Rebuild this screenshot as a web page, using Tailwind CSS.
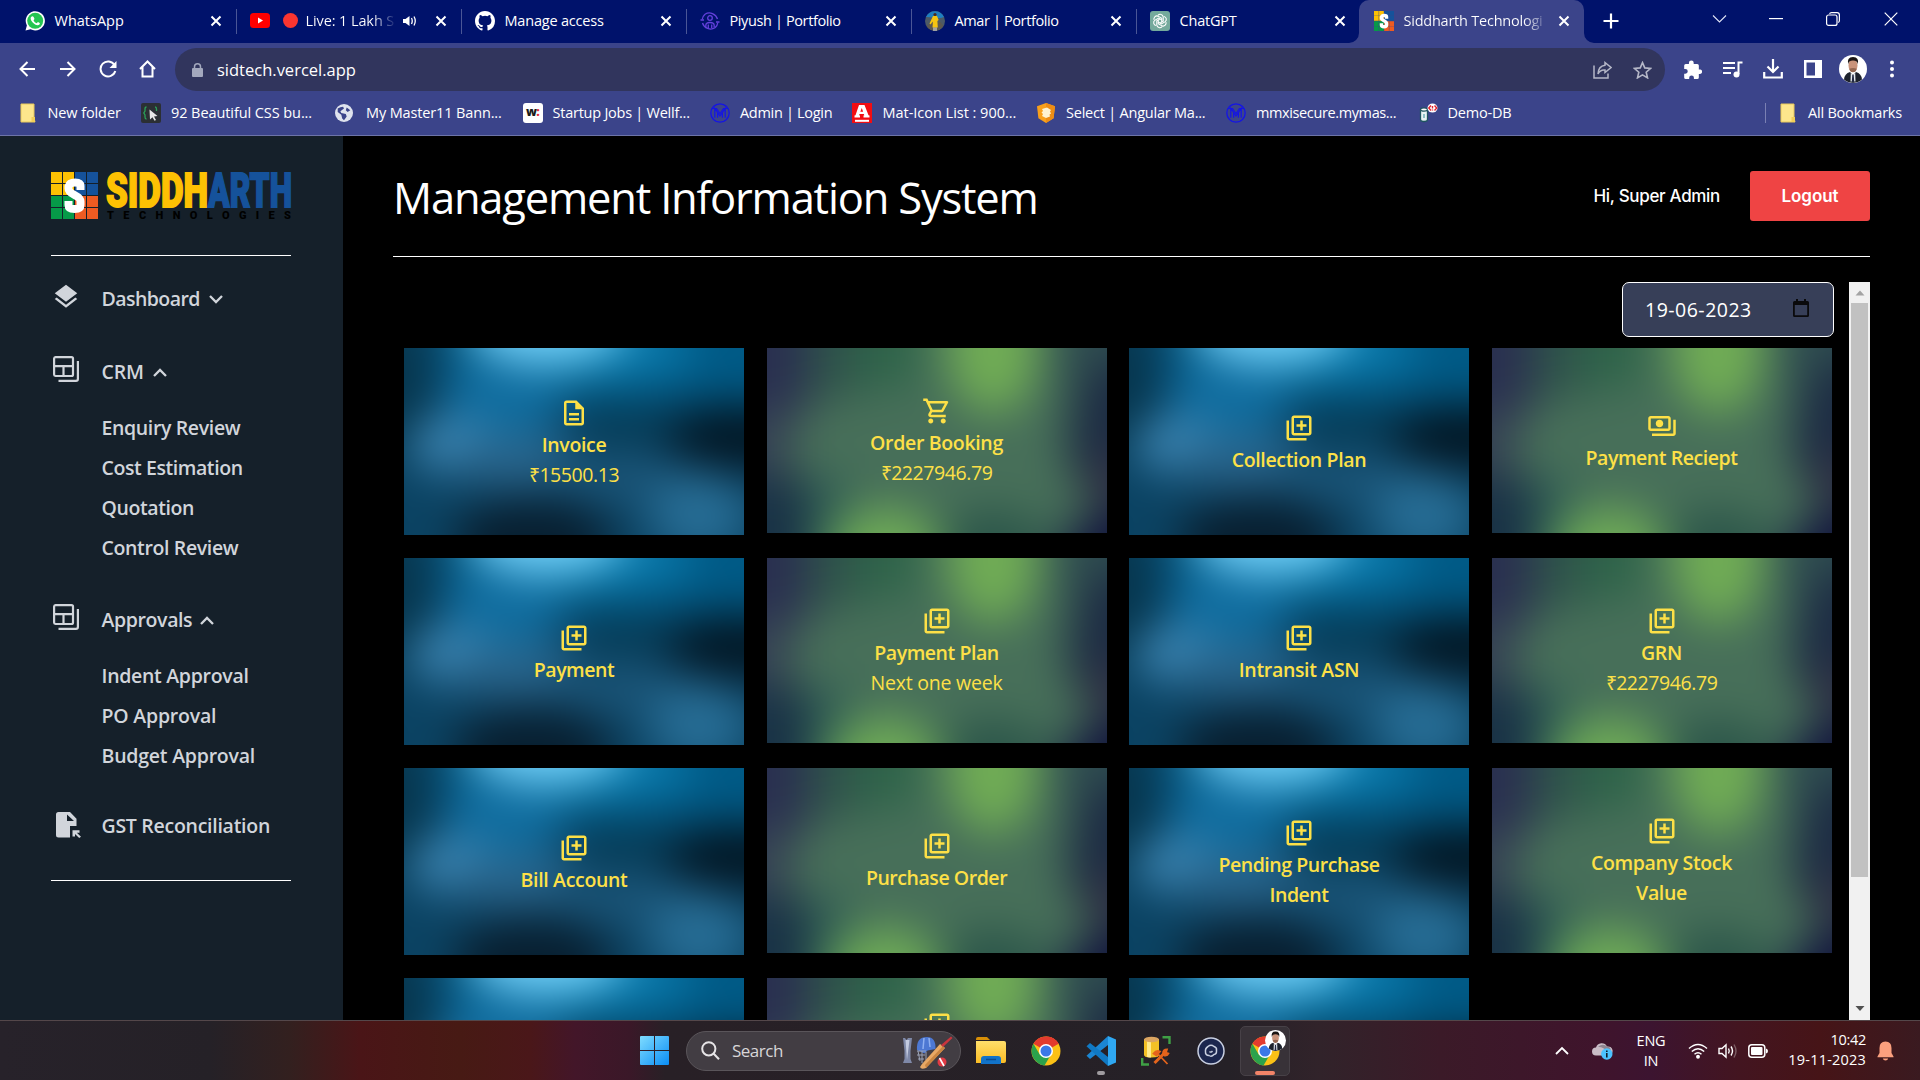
<!DOCTYPE html>
<html lang="en">
<head>
<meta charset="utf-8">
<title>Siddharth Technologies</title>
<script src="https://cdn.jsdelivr.net/npm/@tailwindcss/browser@4"></script>
</head>
<body class="w-[1920px] h-[1080px] overflow-hidden bg-black text-white font-['Open_Sans',sans-serif] flex flex-col">

<!-- shared symbols -->
<svg width="0" height="0" class="absolute">
  <defs>
    <filter id="soft" x="-60%" y="-60%" width="220%" height="220%" color-interpolation-filters="sRGB"><feGaussianBlur stdDeviation="22"/></filter>
    <linearGradient id="win" x1="0" y1="0" x2="1" y2="1"><stop offset="0" stop-color="#7fdcff"/><stop offset="1" stop-color="#0a8df5"/></linearGradient>
    <linearGradient id="fold" x1="0" y1="0" x2="0" y2="1"><stop offset="0" stop-color="#ffdf6b"/><stop offset="1" stop-color="#fbbc24"/></linearGradient>
  </defs>
  <symbol id="blue" viewBox="0 0 340 187" preserveAspectRatio="none">
    <rect width="340" height="187" fill="#0c4565"/>
    <g filter="url(#soft)">
      <rect x="-80" y="-80" width="500" height="350" fill="#0c4464"/>
      <rect x="40" y="-80" width="380" height="132" fill="#005a86"/>
      <ellipse cx="100" cy="50" rx="60" ry="45" fill="#0f6c9e"/>
      <ellipse cx="200" cy="0" rx="90" ry="32" fill="#0a7aac"/>
      <ellipse cx="142" cy="-24" rx="80" ry="40" fill="#74d2fa"/>
      <ellipse cx="-14" cy="40" rx="44" ry="70" fill="#06364e"/>
      <ellipse cx="48" cy="96" rx="44" ry="27" fill="#3c86b4"/>
      <ellipse cx="112" cy="112" rx="60" ry="26" fill="#2a658c"/>
      <ellipse cx="225" cy="78" rx="56" ry="18" fill="#043a54"/>
      <ellipse cx="335" cy="90" rx="72" ry="34" fill="#021826"/>
      <ellipse cx="215" cy="130" rx="60" ry="24" fill="#1b5578"/>
      <ellipse cx="128" cy="192" rx="80" ry="42" fill="#081f30"/>
      <ellipse cx="295" cy="166" rx="50" ry="44" fill="#266c94"/>
      <ellipse cx="-20" cy="180" rx="40" ry="50" fill="#0a4262"/>
    </g>
  </symbol>
  <symbol id="green" viewBox="0 0 340 185" preserveAspectRatio="none">
    <rect width="340" height="185" fill="#456f58"/>
    <g filter="url(#soft)">
      <rect x="-80" y="-80" width="500" height="350" fill="#476f59"/>
      <rect x="-80" y="-80" width="120" height="150" fill="#2a3050"/>
      <rect x="-80" y="60" width="104" height="70" fill="#364254"/>
      <rect x="-80" y="130" width="120" height="140" fill="#193246"/>
      <rect x="40" y="-80" width="50" height="130" fill="#2f534b"/>
      <rect x="40" y="130" width="40" height="100" fill="#305e54"/>
      <rect x="90" y="-80" width="60" height="120" fill="#2e6449"/>
      <ellipse cx="226" cy="0" rx="46" ry="66" fill="#70ac55"/>
      <rect x="290" y="-80" width="130" height="120" fill="#2f4d50"/>
      <ellipse cx="360" cy="90" rx="60" ry="80" fill="#1d2c44"/>
      <ellipse cx="352" cy="132" rx="36" ry="28" fill="#303044"/>
      <ellipse cx="225" cy="208" rx="60" ry="46" fill="#2c564a"/>
      <ellipse cx="118" cy="206" rx="58" ry="46" fill="#6eab56"/>
      <ellipse cx="362" cy="208" rx="70" ry="46" fill="#12163e"/>
    </g>
  </symbol>
  <symbol id="i-doc" viewBox="0 0 24 24"><path fill="currentColor" d="M8 16h8v2H8zm0-4h8v2H8zm6-10H6c-1.100 0-2 .9-2 2v16c0 1.100.890 2 1.990 2H18c1.100 0 2-.9 2-2V8l-6-6zm4 18H6V4h7v5h5v11z"/></symbol>
  <symbol id="i-cart" viewBox="0 0 24 24"><path fill="currentColor" d="M15.550 13c.750 0 1.410-.410 1.750-1.030l3.580-6.490A.996.996 0 0 0 20.010 4H5.210l-.940-2H1v2h2l3.600 7.590-1.350 2.440C4.520 15.370 5.480 17 7 17h12v-2H7l1.100-2h7.450zM6.160 6h12.150l-2.760 5H8.530L6.160 6zM7 18c-1.100 0-1.990.9-1.990 2S5.900 22 7 22s2-.9 2-2-.9-2-2-2zm10 0c-1.100 0-1.990.9-1.990 2s.89 2 1.990 2 2-.9 2-2-.9-2-2-2z"/></symbol>
  <symbol id="i-lib" viewBox="0 0 24 24"><path fill="currentColor" d="M4 6H2v14c0 1.100.9 2 2 2h14v-2H4V6zm16-4H8c-1.100 0-2 .9-2 2v12c0 1.100.9 2 2 2h12c1.100 0 2-.9 2-2V4c0-1.100-.9-2-2-2zm0 14H8V4h12v12zm-7-2h2v-3h3V9h-3V6h-2v3h-3v2h3z"/></symbol>
  <symbol id="i-pay" viewBox="0 0 24 24"><path fill="currentColor" d="M19 14V6c0-1.100-.9-2-2-2H3c-1.100 0-2 .9-2 2v8c0 1.100.9 2 2 2h14c1.100 0 2-.9 2-2zm-2 0H3V6h14v8zm-7-7c-1.660 0-3 1.340-3 3s1.340 3 3 3 3-1.340 3-3-1.340-3-3-3zm13 0v11c0 1.100-.9 2-2 2H4v-2h17V7h2z"/></symbol>
  <symbol id="i-ballot" viewBox="0 0 26 26"><path fill="none" stroke="currentColor" stroke-width="2.200" d="M2.500 1.100h16a1.500 1.500 0 0 1 1.500 1.500v15.900a1.500 1.500 0 0 1-1.500 1.500h-16a1.500 1.500 0 0 1-1.400-1.500v-16a1.500 1.500 0 0 1 1.400-1.400zM1 10.200h19M10.500 10.200V20M24.900 5v18a1.900 1.900 0 0 1-1.900 1.900H5.500"/></symbol>
  <symbol id="x" viewBox="0 0 12 12"><path d="M1.500 1.500l9 9m0-9l-9 9" stroke="#fff" stroke-width="2"/></symbol>
  <symbol id="bfolder" viewBox="0 0 20 20"><path d="M3 1h13v14l1 4H3z" fill="#fde68c" stroke="#e9c95a" stroke-width="1"/><path d="M13.500 19v-5h3.500v5z" fill="#f2cf57"/></symbol>
  <symbol id="bm" viewBox="0 0 20 20"><circle cx="10" cy="10" r="9.200" fill="none" stroke="#1414e6" stroke-width="1.300"/><path d="M4.800 14.800V5.500L10 13l5.200-7.500v9.300M7.600 14.800V9.300M12.400 14.800V9.300M2.800 5.500h3.700L10 10.500l3.500-5h3.700" fill="none" stroke="#1414e6" stroke-width="1.200"/></symbol>
  <symbol id="chrome" viewBox="0 0 30 30"><circle cx="15" cy="15" r="14.500" fill="#fbc116"/><path d="M15 15L2.440 7.750A14.500 14.500 0 0 1 27.560 7.750z" fill="#e33b2e"/><path d="M15 .5a14.500 14.500 0 0 1 12.560 7.250H15z" fill="#e33b2e"/><path d="M2.440 7.750A14.500 14.500 0 0 0 13.500 29.400l6.500-11L15 15l-6.300 3.600z" fill="#2ba24c"/><circle cx="15" cy="15" r="7" fill="#fff"/><circle cx="15" cy="15" r="5.500" fill="#3b78e7"/></symbol>
  <symbol id="face" viewBox="0 0 28 28"><circle cx="14" cy="14" r="14" fill="#fff"/><path d="M5 24.500q.5-6 6-7.500l3 3 3-3q5.500 1.500 6 7.500A14 14 0 0 1 5 24.500z" fill="#1d222c"/><path d="M11.800 17.500l2.200 3 2.200-3 .3 9h-5z" fill="#e8edf2"/><path d="M13.300 20h1.400l.6 7.500h-2.600z" fill="#232a45"/><ellipse cx="14" cy="10.500" rx="4.500" ry="6.500" fill="#c9937a"/><path d="M9.200 9.500Q7.500 2 14 2t4.800 7.500Q18.600 5.500 14 5.500T9.200 9.500z" fill="#1b1513"/><path d="M10.200 13.800q1.800-.8 3.800-.8t3.800.8q-.8 3.500-3.800 3.500t-3.800-3.500z" fill="#936650"/></symbol>
  <symbol id="sid" viewBox="0 0 47 47"><path fill="#fdc103" d="M0 0h11v11H0zM12 0h11v11H12zM0 12h11v11H0zM12 12h11v11H12z"/><path fill="#15529b" d="M24 0h11v11H24zM36 0h11v11H36zM24 12h11v11H24zM36 12h11v11H36z"/><path fill="#069a48" d="M0 24h11v11H0zM12 24h11v11H12zM0 36h11v11H0zM12 36h11v11H12z"/><path fill="#ee5b22" d="M24 24h11v11H24zM36 24h11v11H36zM24 36h11v11H24zM36 36h11v11H36z"/><path d="M29.500 18v-4q0-3.500-5.500-3.500t-6.500 4v2q0 3.500 6 6.500t6 6.500v3.500q0 4-6 4t-6-4v-4" fill="none" stroke="#fff" stroke-width="8"/></symbol>
</svg>

<!-- tab strip -->
<header class="h-[43px] shrink-0 bg-[#00126b] flex items-start pl-[10.5px] text-[14.5px] whitespace-nowrap">
  <div class="w-[225px] h-[41px] flex items-center pl-[14px] relative">
    <svg class="size-5" viewBox="0 0 20 20"><path d="M.5 19.500l1.400-5A9.600 9.600 0 1 1 5.600 18.200z" fill="#fff"/><circle cx="10.200" cy="9.800" r="8" fill="#25c651"/><path d="M7.200 5.200c-2.500 1-1.600 4 .5 6.200s5 4 7 1.900c.7-1-.3-1.700-1.800-2.300l-1.200 1.200c-1.500-.5-2.500-1.500-3.200-3l1-1.200c-.5-1.500-1-2.800-2.300-2.800z" fill="#fff"/></svg>
    <span class="ml-[10px]">WhatsApp</span>
    <svg class="size-3 absolute right-[13.500px] top-[15px]"><use href="#x"/></svg>
  </div>
  <div class="w-[225px] h-[41px] flex items-center pl-[14px] relative">
    <i class="absolute left-0 top-[9px] w-px h-[25px] bg-[#4a5696]"></i>
    <svg class="w-5 h-[15px]" viewBox="0 0 20 15"><rect width="20" height="15" rx="3.500" fill="#f00"/><path d="M8 4.500v6l5-3z" fill="#fff"/></svg>
    <i class="ml-[13px] w-[15px] h-[15px] rounded-full bg-[#fa3530]"></i>
    <span class="ml-2 w-[88px] overflow-hidden tracking-[-0.1px] bg-[linear-gradient(90deg,#fff_75%,#00126b_103%)] bg-clip-text text-transparent">Live: 1 Lakh S</span>
    <svg class="ml-[9px] w-[13px] h-3" viewBox="0 0 13 12"><path d="M0 4h2.500L6.500 1v10L2.500 8H0z" fill="#fff"/><path d="M8.500 3q1.500 3 0 6M11 1.500q2.500 4.500 0 9" stroke="#fff" stroke-width="1.300" fill="none"/></svg>
    <svg class="size-3 absolute right-[13.500px] top-[15px]"><use href="#x"/></svg>
  </div>
  <div class="w-[225px] h-[41px] flex items-center pl-[14px] relative">
    <i class="absolute left-0 top-[9px] w-px h-[25px] bg-[#4a5696]"></i>
    <svg class="size-5" viewBox="0 0 16 16"><path fill="#fff" d="M8 0C3.580 0 0 3.580 0 8c0 3.540 2.290 6.530 5.470 7.590.4.070.55-.17.55-.38 0-.19-.01-.82-.01-1.490-2.010.37-2.530-.49-2.690-.94-.09-.23-.48-.94-.82-1.130-.28-.15-.68-.52-.01-.53.63-.01 1.080.58 1.230.82.72 1.210 1.870.87 2.330.66.07-.52.28-.87.51-1.070-1.780-.2-3.640-.89-3.640-3.950 0-.87.31-1.590.82-2.150-.08-.2-.36-1.020.08-2.120 0 0 .67-.21 2.200.82a7.640 7.640 0 0 1 4 0c1.530-1.040 2.200-.82 2.200-.82.44 1.100.16 1.920.08 2.120.51.56.82 1.270.82 2.150 0 3.070-1.870 3.750-3.650 3.950.29.25.54.73.54 1.480 0 1.070-.01 1.930-.01 2.200 0 .21.15.46.55.38A8.010 8.010 0 0 0 16 8c0-4.420-3.580-8-8-8z"/></svg>
    <span class="ml-[10px] tracking-[-0.2px]">Manage access</span>
    <svg class="size-3 absolute right-[13.500px] top-[15px]"><use href="#x"/></svg>
  </div>
  <div class="w-[225px] h-[41px] flex items-center pl-[14px] relative">
    <i class="absolute left-0 top-[9px] w-px h-[25px] bg-[#4a5696]"></i>
    <svg class="size-5" viewBox="0 0 20 20" fill="none" stroke="#6340dc" stroke-width="1.300"><path d="M5 3.200A8.500 8.500 0 0 1 17.500 8M15 16.800A8.500 8.500 0 0 1 2.500 12M2.200 8.500a8 8 0 0 1 2.800-5.300M17.800 11.500a8 8 0 0 1-2.800 5.300"/><circle cx="10" cy="7" r="2.300"/><path d="M5.800 16.500v-2q0-3 4.200-3t4.200 3v2M8.300 13.500v3.500m3.400-3.500v3.500M.5 9h3.500m12 2h3.500"/></svg>
    <span class="ml-[10px] tracking-[-0.38px]">Piyush | Portfolio</span>
    <svg class="size-3 absolute right-[13.500px] top-[15px]"><use href="#x"/></svg>
  </div>
  <div class="w-[225px] h-[41px] flex items-center pl-[14px] relative">
    <i class="absolute left-0 top-[9px] w-px h-[25px] bg-[#4a5696]"></i>
    <svg class="size-5" viewBox="0 0 20 20"><circle cx="10" cy="10" r="10" fill="#4d5a66"/><path d="M1 6A10 10 0 0 1 19 6q-5 2-9 1T1 6z" fill="#1f7fc0"/><path d="M1.500 15a10 10 0 0 0 17 0l-3-4-10 1z" fill="#5c5850"/><path d="M8 5h4l1.600 4-1.200 1 .4 6.500H7.500l.4-6-2.400 3-1-1z" fill="#f5c411"/><circle cx="10" cy="3.500" r="1.600" fill="#4a2b1c"/><path d="M8.500 16.500h1V20h-1zm2 0h1V20h-1z" fill="#eee"/></svg>
    <span class="ml-[10px] tracking-[-0.38px]">Amar | Portfolio</span>
    <svg class="size-3 absolute right-[13.500px] top-[15px]"><use href="#x"/></svg>
  </div>
  <div class="w-[223.500px] h-[41px] flex items-center pl-[14px] relative">
    <i class="absolute left-0 top-[9px] w-px h-[25px] bg-[#4a5696]"></i>
    <svg class="size-5" viewBox="0 0 20 20" fill="none" stroke="#fff" stroke-width="1.100"><rect width="20" height="20" rx="3" fill="#74aa9c" stroke="none"/><path id="pet" d="M8 4.300a3 3 0 0 1 5.200 1.500v4.400l-3.200 1.900"/><use href="#pet" transform="rotate(60 10 10)"/><use href="#pet" transform="rotate(120 10 10)"/><use href="#pet" transform="rotate(180 10 10)"/><use href="#pet" transform="rotate(240 10 10)"/><use href="#pet" transform="rotate(300 10 10)"/></svg>
    <span class="ml-[10px] tracking-[-0.2px]">ChatGPT</span>
    <svg class="size-3 absolute right-[13.500px] top-[15px]"><use href="#x"/></svg>
  </div>
  <div class="w-[225px] h-[43px] pb-[2px] flex items-center pl-[15px] relative bg-[#3b448a] rounded-t-[10px]">
    <svg class="absolute -left-[10px] bottom-0 size-[10px]" viewBox="0 0 10 10"><path d="M10 0v10H0A10 10 0 0 0 10 0z" fill="#3b448a"/></svg>
    <svg class="absolute -right-[10px] bottom-0 size-[10px]" viewBox="0 0 10 10"><path d="M0 0v10h10A10 10 0 0 1 0 0z" fill="#3b448a"/></svg>
    <svg class="size-5"><use href="#sid"/></svg>
    <span class="ml-[9.500px] w-[141px] overflow-hidden tracking-[-0.23px] bg-[linear-gradient(90deg,#fff_85%,#3b448a_103%)] bg-clip-text text-transparent">Siddharth Technologi</span>
    <svg class="size-3 absolute right-[14.500px] top-[15px]"><use href="#x"/></svg>
  </div>
  <svg class="ml-[19px] mt-[13px] size-4" viewBox="0 0 16 16"><path d="M8 0.500v15M.5 8h15" stroke="#fff" stroke-width="2.200"/></svg>
  <svg class="ml-[92.500px] mt-[14px] w-[15px] h-[10px]" viewBox="0 0 15 10"><path d="M1 1.500l6.500 6.500L14 1.500" stroke="#dfe3f5" stroke-width="1.100" fill="none"/></svg>
  <svg class="ml-[42.500px] mt-[18px] w-[14px] h-[2px]"><rect width="14" height="1.200" fill="#fff"/></svg>
  <svg class="ml-[43px] mt-[12px] size-[14px]" viewBox="0 0 14 14" fill="none" stroke="#fff" stroke-width="1.200"><rect x=".6" y="3" width="10.400" height="10.400" rx="2"/><path d="M3.500 1.800q.5-1.200 2-1.200H11q2.400 0 2.400 2.400v5.500q0 1.500-1.200 2"/></svg>
  <svg class="ml-[44px] mt-[12px] size-[14px]" viewBox="0 0 14 14"><path d="M.7.700l12.600 12.600M13.300.700L.7 13.300" stroke="#fff" stroke-width="1.200"/></svg>
</header>

<!-- toolbar -->
<div class="h-[52px] shrink-0 bg-[#3b448a] flex items-center pl-[19px] text-[16.5px]">
  <svg class="size-4" viewBox="0 0 16 16" fill="none" stroke="#fff" stroke-width="2"><path d="M16 8H1.500M8.500 1L1.500 8l7 7"/></svg>
  <svg class="size-4 ml-[24.500px]" viewBox="0 0 16 16" fill="none" stroke="#fff" stroke-width="2"><path d="M0 8h14.500M7.500 1l7 7-7 7"/></svg>
  <svg class="w-[18px] h-[18px] ml-[23.500px]" viewBox="0 0 18 18"><path d="M15.500 5A7.500 7.500 0 1 0 16.300 11" fill="none" stroke="#fff" stroke-width="2"/><path d="M17.500 1v7h-7z" fill="#fff"/></svg>
  <svg class="w-[17px] h-[18px] ml-[22px]" viewBox="0 0 17 18" fill="none" stroke="#fff" stroke-width="2"><path d="M1 9l7.500-7.500L16 9M3.500 7v9.500h10V7"/></svg>
  <div class="ml-[19px] w-[1490px] h-[43px] mt-px rounded-full bg-[#31355d] flex items-center pl-[17px] pr-[13px]">
    <svg class="w-[11px] h-[14px]" viewBox="0 0 11 14"><rect y="5" width="11" height="9" rx="1" fill="#a3a8bd"/><path d="M2.500 6V3.800a3 3 0 0 1 6 0V6" fill="none" stroke="#a3a8bd" stroke-width="1.500"/></svg>
    <span class="ml-[14px] leading-[20px] mt-px">sidtech.vercel.app</span>
    <svg class="ml-auto w-[19px] h-[18px]" viewBox="0 0 19 18" fill="none" stroke="#b5b7c7" stroke-width="1.500"><path d="M1 4.500V17h14v-4.500M12 1.500l6 5-6 5V9Q7 8.500 5 13q.3-8 7-8.800z"/></svg>
    <svg class="ml-[21px] w-[19px] h-[18px]" viewBox="0 0 20 19" fill="none" stroke="#b5b7c7" stroke-width="1.700"><path d="M10 1.700l2.400 5.600 6.100.5-4.600 4 1.400 6-5.300-3.200-5.300 3.200 1.400-6-4.600-4 6.100-.5z"/></svg>
  </div>
  <svg class="ml-[18px] w-[19px] h-[19px]" viewBox="0 0 24 24"><path fill="#fff" d="M22 12h-2V7a2 2 0 0 0-2-2h-4.500V3.500a3 3 0 0 0-6 0V5H3.500a2 2 0 0 0-2 2v4.300H3a3 3 0 0 1 0 6H1.500V22a2 2 0 0 0 2 2h4.300v-1.500a3 3 0 0 1 6 0V24H18a2 2 0 0 0 2-2v-4.300h1.500a2.900 2.900 0 0 0 .5-5.700z"/></svg>
  <svg class="ml-[21px] w-[20px] h-[17px]" viewBox="0 0 20 17"><path d="M0 2h12M0 7h12M0 12h8M19.500 1.500H15.500V13" stroke="#fff" stroke-width="2" fill="none"/><circle cx="13.500" cy="13.500" r="3" fill="#fff"/></svg>
  <svg class="ml-[20px] w-[20px] h-[20px]" viewBox="0 0 20 20" fill="none" stroke="#fff" stroke-width="2.200"><path d="M10 0v12M4.500 7.500L10 13l5.500-5.500M1.200 13v5.500h17.600V13"/></svg>
  <svg class="ml-[21px] w-[18px] h-[18px]" viewBox="0 0 18 18"><path fill="#fff" fill-rule="evenodd" d="M0 0h18v18H0zM2.500 2.500v13H11v-13z"/></svg>
  <svg class="ml-[17px] size-7"><use href="#face"/></svg>
  <svg class="ml-[23px] w-[4px] h-[18px]" viewBox="0 0 4 18" fill="#fff"><circle cx="2" cy="2.500" r="2"/><circle cx="2" cy="9" r="2"/><circle cx="2" cy="15.500" r="2"/></svg>
</div>

<!-- bookmarks bar -->
<div class="h-[41px] shrink-0 bg-[#3b448a] border-b border-[#6d74a8] flex items-center pl-[18px] pb-[5px] text-[14.5px] whitespace-nowrap tracking-[-0.2px]">
  <div class="w-[123px] flex items-center gap-[9.500px]"><svg class="size-5"><use href="#bfolder"/></svg><span class="tracking-[-0.1px]">New folder</span></div>
  <div class="w-[195px] flex items-center gap-[10px]"><svg class="size-5" viewBox="0 0 20 20"><rect width="20" height="20" rx="2" fill="#2b2f33"/><path d="M5.500 4Q4 4 4 6v2L2.800 10 4 12v2q0 2 1.500 2M14 4q1.500 0 1.500 2v2" stroke="#2ba05a" stroke-width="1.300" fill="none"/><path d="M8.500 6.500l8 6.500-3.500.5 2 3.500-1.500.8-2-3.500L9 16.500z" fill="#e8e8e8"/></svg><span class="tracking-[-0.08px]">92 Beautiful CSS bu...</span></div>
  <div class="w-[186.600px] flex items-center gap-[13px]"><svg class="size-[18px] -ml-px" viewBox="0 0 20 20"><circle cx="10" cy="10" r="10" fill="#dfe3ee"/><path d="M3 5q3-2 6-2l1 2-4 3 1 2 5 1 1 3-3 4-2-2-1-4-4-3zM13 4l4 3-3 2-2-2z" fill="#3b448a"/></svg><span class="tracking-[-0.14px]">My Master11 Bann...</span></div>
  <div class="w-[187.400px] flex items-center gap-[10px]"><span class="size-5 rounded-[3px] bg-white text-[#1a1a1a] font-extrabold text-[12px] leading-[18px] text-center font-['Open_Sans'] tracking-[-0.5px]">w<b class="text-[#e8303a]">:</b></span><span class="tracking-[-0.25px]">Startup Jobs | Wellf...</span></div>
  <div class="w-[142.500px] flex items-center gap-[10px]"><svg class="size-5"><use href="#bm"/></svg><span class="tracking-[-0.3px]">Admin | Login</span></div>
  <div class="w-[184px] flex items-center gap-[10px]"><svg class="size-5" viewBox="0 0 20 20"><rect width="20" height="20" fill="#f20d12"/><path d="M3 17.800h14" stroke="#fff" stroke-width="2"/><path fill="#fff" fill-rule="evenodd" d="M2.500 14.500v-2l1-.3L7 2h5.500l4 10.200 1 .3v2h-6v-2l.8-.3-.4-1.200H7.500l-.4 1.200.9.300v2zM8.300 8.700h2.800L9.800 5z"/></svg><span class="tracking-[-0.02px]">Mat-Icon List : 900...</span></div>
  <div class="w-[190px] flex items-center gap-[9.500px]"><svg class="size-5" viewBox="0 0 20 20"><path d="M10 0l9 3.300-1.400 12L10 20 2.400 15.300 1 3.300z" fill="#f9a01b"/><path d="M10 0l9 3.300-1.400 12L10 20z" fill="#ee8d14"/><path d="M6 6l5-1.500L15 7l-1 1.500 1 2-1.500 1 .5 2L10 15l-4-2 1-2-1.500-1.500L7 8z" fill="#fff3d0"/></svg><span class="tracking-[-0.22px]">Select | Angular Ma...</span></div>
  <div class="w-[191.500px] flex items-center gap-[9.500px]"><svg class="size-5"><use href="#bm"/></svg><span class="tracking-[-0.38px]">mmxisecure.mymas...</span></div>
  <div class="flex items-center gap-[9.500px]"><svg class="size-5" viewBox="0 0 20 20"><path d="M2.500 6.500v10q0 2 3.500 2t3.500-2v-10" fill="#e9f4f4" stroke="#1f5560" stroke-width="1.300"/><ellipse cx="6" cy="6.500" rx="3.500" ry="1.600" fill="#fff" stroke="#1f5560" stroke-width="1.300"/><path d="M6 15v-4" stroke="#6fb0b8" stroke-width="1.500"/><ellipse cx="14.500" cy="5" rx="5" ry="4.500" fill="#fff"/><path d="M13 2.500L10.800 5 13 7.500M16.500 2.500L18.700 5l-2.200 2.500M14.500 3v2.500m0 1v1" stroke="#e0242f" stroke-width="1.400" fill="none"/></svg><span class="tracking-[-0.2px]">Demo-DB</span></div>
  <i class="ml-auto w-px h-5 bg-[#7a80b3]"></i>
  <svg class="ml-[12px] size-5"><use href="#bfolder"/></svg><span class="ml-[10px] mr-[18px]">All Bookmarks</span>
</div>

<!-- web page -->
<div class="h-[884px] shrink-0 flex overflow-hidden">
  <aside class="w-[343px] bg-[#15202a] px-[51px] pt-[35px] text-[#d1d5db] text-[19.5px] font-semibold tracking-[-0.35px] whitespace-nowrap">
    <svg class="w-[241px] h-[49px] tracking-normal" viewBox="0 -1 241 49">
      <svg width="47" height="47"><use href="#sid"/></svg>
      <g font-family="Roboto, sans-serif" font-weight="900">
        <g transform="translate(55 34.500)" font-size="47.500" stroke-width="1.800"><text textLength="102" lengthAdjust="spacingAndGlyphs" fill="#fdc103" stroke="#fdc103">SIDDH</text><text x="102" textLength="84" lengthAdjust="spacingAndGlyphs" fill="#15529b" stroke="#15529b">ARTH</text></g>
        <text x="56" y="46.800" font-size="11" textLength="184" fill="#000">TECHNOLOGIES</text>
      </g>
    </svg>
    <hr class="mt-[35px] w-[240px] border-0 h-px bg-white">
    <nav class="mt-[23px]">
      <div class="h-10 flex items-center"><svg class="w-[30px] h-[30px] -mt-[7px]" viewBox="0 0 24 24"><path fill="currentColor" d="M12 3L3 9.800l9 6.700 9-6.700zM12 18.900l-7.500-5.700L3 14.400l9 6.900 9-6.900-1.500-1.200z"/></svg><span class="ml-[20.500px] tracking-[-0.55px]">Dashboard</span><svg class="ml-[9px] w-[14px] h-[9px]" viewBox="0 0 14 9"><path d="M1 1l6 6 6-6" fill="none" stroke="currentColor" stroke-width="2.300"/></svg></div>
      <div class="mt-[33px] h-10 flex items-center"><svg class="size-[26px] ml-[2px] -mt-[7px]"><use href="#i-ballot"/></svg><span class="ml-[22.500px] tracking-[-0.1px]">CRM</span><svg class="ml-[9px] w-[14px] h-[9px]" viewBox="0 0 14 9"><path d="M1 8l6-6 6 6" fill="none" stroke="currentColor" stroke-width="2.300"/></svg></div>
      <ul class="mt-[16px] pl-[50.500px] leading-[40px]"><li class="tracking-[-0.36px]">Enquiry Review</li><li class="tracking-[-0.42px]">Cost Estimation</li><li class="tracking-[-0.4px]">Quotation</li><li class="tracking-[-0.36px]">Control Review</li></ul>
      <div class="mt-[32px] h-10 flex items-center"><svg class="size-[26px] ml-[2px] -mt-[7px]"><use href="#i-ballot"/></svg><span class="ml-[22.500px] tracking-[-0.38px]">Approvals</span><svg class="ml-[8px] w-[14px] h-[9px]" viewBox="0 0 14 9"><path d="M1 8l6-6 6 6" fill="none" stroke="currentColor" stroke-width="2.300"/></svg></div>
      <ul class="mt-[16px] pl-[50.500px] leading-[40px]"><li class="tracking-[-0.3px]">Indent Approval</li><li class="tracking-[-0.2px]">PO Approval</li><li class="tracking-[-0.22px]">Budget Approval</li></ul>
      <div class="mt-[29.500px] h-10 flex items-center"><svg class="w-[25px] h-[26px] ml-[5px] -mt-px" viewBox="0 0 25 26"><path fill="currentColor" fill-rule="evenodd" d="M2.500 0H14l6.500 6.800V14H14v11.500H2.500A2.500 2.500 0 0 1 0 23V2.500A2.500 2.500 0 0 1 2.500 0zM11 2.500V9h7z"/><path fill="currentColor" d="M16.500 18.200h7v2.500h-2.700l4.200 4L23.200 26 19 22v2.500h-2.500z"/></svg><span class="ml-[20.500px] tracking-[-0.27px]">GST Reconciliation</span></div>
    </nav>
    <hr class="mt-[34.500px] w-[240px] border-0 h-px bg-white">
  </aside>

  <main class="flex-1 pl-[50px] pr-[50px] flex flex-col">
    <div class="h-[120px] flex items-center text-[17px]">
      <h1 class="text-[43.5px] leading-[60px] tracking-[-1.2px] mt-[4px] whitespace-nowrap">Management Information System</h1>
      <span class="ml-auto mt-px font-[Inter] font-medium tracking-[-0.32px]">Hi, Super Admin</span>
      <button class="ml-[30px] w-[120px] h-[50px] pt-px rounded-[3px] bg-[#ef4444] font-[Inter] font-semibold tracking-[-0.05px]">Logout</button>
    </div>
    <div class="h-px bg-white"></div>
    <div class="flex mt-[25px] h-[738px] overflow-hidden">
      <div class="flex-1 pl-[11px]">
        <div class="flex"><div class="ml-[1218px] w-[212px] h-[55px] rounded-[7px] border border-white bg-[#373f58] flex items-center pl-[22px] text-[19.5px] tracking-[0.5px] whitespace-nowrap">19-06-2023<svg class="ml-[41px] -mt-[3px] w-4 h-[18px]" viewBox="0 0 16 18"><path fill="#0a0a0c" fill-rule="evenodd" d="M3 0h2v2h6V0h2v2h1.500A1.500 1.500 0 0 1 16 3.500v13a1.500 1.500 0 0 1-1.500 1.500h-13A1.500 1.500 0 0 1 0 16.500v-13A1.500 1.500 0 0 1 1.500 2H3zM1.800 6v10.200h12.400V6z"/></svg></div></div>
        <div id="grid" class="mt-[11px] grid grid-cols-[repeat(4,340px)] gap-x-[22.500px] auto-rows-[187px] gap-y-[23px] text-[#fde047] text-[19.5px] leading-[30px]"></div>
      </div>
      <div class="w-[21px] bg-[#f1f1f1] flex flex-col items-center">
        <svg class="h-[21px] w-[10px]" viewBox="0 0 10 21"><path d="M5 8.500l4.500 5h-9z" fill="#a3a3a3"/></svg>
        <div class="w-[17px] h-[574px] bg-[#c1c1c1]"></div>
        <svg class="mt-auto h-[23px] w-[10px]" viewBox="0 0 10 23"><path d="M5 14l4.500-5h-9z" fill="#505050"/></svg>
      </div>
    </div>
  </main>
</div>

<!-- taskbar -->
<footer class="h-[60px] shrink-0 border-t border-[#54474a] bg-[linear-gradient(90deg,#27222a_0,#252127_210px,#33201f_290px,#4a1517_360px,#471a14_460px,#4a1719_530px,#431629_575px,#3a1828_630px,#282026_665px,#252127_1230px,#31232a_1320px,#3b1a28_1440px,#3f142c_1600px,#3c1430_1650px,#431520_1740px,#461417_1820px,#3a1a20_1920px)] flex items-center text-[14.5px]">
  <svg class="ml-[640px] size-[29px]" viewBox="0 0 29 29"><path fill="url(#win)" d="M0 1q0-1 1-1h13v14H0zM15 0h13q1 0 1 1v13H15zM0 15h14v14H1q-1 0-1-1zM15 15h14v13q0 1-1 1H15z"/></svg>
  <div class="ml-[17px] w-[275px] h-10 rounded-full bg-[#423d43] border border-[#5a555a] flex items-center pl-[14px] text-[17px] text-[#d8d6d8]">
    <svg class="size-[19px]" viewBox="0 0 19 19" fill="none" stroke="#e6e4e6" stroke-width="2"><circle cx="7.800" cy="7.800" r="6.600"/><path d="M12.500 12.500l5.500 5.800"/></svg>
    <span class="ml-[12px] tracking-[-0.5px]">Search</span>
    <svg class="ml-auto mr-[6px] w-[52px] h-[36px] mt-[4px]" viewBox="0 0 52 36"><path d="M1 3h2l1.500 2L6 3h4L8.500 16v8l1.500 4H1l1.500-4v-8z" fill="#7f89a8"/><path d="M3.500 5l1.500 20L7.500 5z" fill="#c4cbe0"/><path d="M15 15Q14 2 25 2q9 0 8.500 12l-8 1.500-3 3z" fill="#4d78d3"/><path d="M22 3l-1 11M27 3l1 9" stroke="#8fb0f0" stroke-width="1.500"/><path d="M15 16h9M15 20h8M16 24h6M16 16l2 10M20 16v12M24 17v8" stroke="#9aa2b5" stroke-width="1" fill="none"/><path d="M20 29L38 9l5 4-19 20q-5 2-6-1z" fill="#e8a865"/><path d="M23 30L41 11l2 2-19 20z" fill="#c98440"/><path d="M39 10L49 1.500l1.500 1.500-9.500 9z" fill="#c9353d"/><circle cx="40" cy="27" r="4.500" fill="#e03a44"/><path d="M37.500 23l4.500 8" stroke="#fff" stroke-width="1.600"/></svg>
  </div>
  <svg class="ml-[15px] w-[30px] h-[27px]" viewBox="0 0 30 27"><path d="M0 2q0-2 2-2h9l3 3H0z" fill="#d98f07"/><path d="M0 4h28q2 0 2 2v18q0 2-2 2H0z" fill="url(#fold)"/><path d="M5 27v-5q0-3 3-3h14q3 0 3 3v5z" fill="#1273c9"/><path d="M10 22.500h10" stroke="#0a4c92" stroke-width="1.500"/></svg>
  <svg class="ml-[25px] size-[30px]"><use href="#chrome"/></svg>
  <div class="ml-[25px] relative"><svg class="size-[30px]" viewBox="0 0 30 30"><path d="M22 0l8 3.500v23L22 30z" fill="#2fa8f2"/><path d="M22 0v9L4 23l-3.500-3.200z" fill="#1b86d3"/><path d="M22 30v-9L4 7 .5 10.200z" fill="#1079c4"/></svg><i class="absolute left-[11px] top-[35px] w-2 h-1 rounded-full bg-[#a09ca0]"></i></div>
  <svg class="ml-[25px] size-[30px]" viewBox="0 0 30 30"><path d="M3 3v16q0 2.500 7.500 2.500t7.500-2.500V3z" fill="#f3c026"/><path d="M6 5v16q2 .5 4 .5V5z" fill="#ffe98a"/><ellipse cx="10.500" cy="3.500" rx="7.500" ry="2.800" fill="#dba562"/><path d="M21.500 1.200h7V8M8 28.500H1.200V22" fill="none" stroke="#3fa045" stroke-width="2.400"/><path d="M13.500 27L24 16.500" stroke="#e4641c" stroke-width="3"/><path d="M16.500 17.500L26.500 28M12.500 17.500q3-4 6.500-2l-3.500 4zM22 17.500q0-4 4-4l-1 3 2.500 1q-1 2.500-4 2z" stroke="#e4641c" stroke-width="1.800" fill="#e4641c"/></svg>
  <svg class="ml-[26px] size-[28px]" viewBox="0 0 28 28" fill="none" stroke="#c8cfe0"><circle cx="14" cy="14" r="13" fill="#1b264e" stroke-width="1.500"/><path d="M11 9.500q3-2.500 6 0 3 .8 2.500 4 .3 3.700-2.500 4-2.500 2.700-5 1-3.700-.3-3.500-3.500-.5-3.700 2.500-5.500z" stroke-width="1.500"/><path d="M12.500 14.500q1.500 1.500 3-.5" stroke-width="1.300"/></svg>
  <div class="ml-[15px] w-[50px] h-[50px] rounded-[5px] bg-[#383238] border border-[#474147] relative"><svg class="absolute left-[9px] top-[9px] size-[30px]"><use href="#chrome"/></svg><svg class="absolute left-[24px] top-[3px] size-[21px]"><use href="#face"/></svg><i class="absolute left-[14px] top-[44px] w-5 h-1 rounded-full bg-[#f28468]"></i></div>
  <svg class="ml-[265px] -mt-[1px] w-[14px] h-[9px]" viewBox="0 0 14 9"><path d="M1 8l6-6 6 6" fill="none" stroke="#fff" stroke-width="1.800"/></svg>
  <svg class="ml-[23px] w-[21px] h-[18px]" viewBox="0 0 21 18"><path d="M4 13.500a4 4 0 0 1 0-8 6 6 0 0 1 11-1 4.500 4.500 0 0 1 2 9z" fill="#c9bcc6"/><path d="M6 5a6 6 0 0 1 9-.5 4.500 4.500 0 0 1 4 3l-5 1q-3-4-8-3.500z" fill="#8e8490"/><circle cx="14.800" cy="12" r="5.700" fill="#4cc2ff"/><path d="M14.800 11v4.500m0-7v1.500" stroke="#10202c" stroke-width="1.600"/></svg>
  <div class="ml-[22px] w-[32px] text-center leading-[20px] text-[14.5px] tracking-[-0.2px]">ENG<br>IN</div>
  <svg class="ml-[21px] w-[20px] h-[16px]" viewBox="0 0 20 16" fill="none" stroke="#fff" stroke-width="1.500"><path d="M1 5.500Q10-2.500 19 5.500M3.800 8.500q6.200-5.500 12.400 0M6.500 11.300q3.500-3 7 0"/><circle cx="10" cy="13.700" r="1.200" fill="#fff"/></svg>
  <svg class="ml-[10px] w-[20px] h-[16px]" viewBox="0 0 20 16" fill="none" stroke="#fff" stroke-width="1.400"><path d="M1 5.500h3L8 1.800v12.400L4 10.500H1z"/><path d="M10.500 5.500q1.500 2.500 0 5M13 3.500q3 4.500 0 9"/><path d="M16 1.500q4 6.500 0 13" stroke="#7d5e64"/></svg>
  <svg class="ml-[10px] w-[20px] h-[14px]" viewBox="0 0 20 14"><rect x=".8" y=".8" width="16" height="12.400" rx="3" fill="none" stroke="#fff" stroke-width="1.500"/><rect x="3" y="3" width="11.500" height="8" rx="1" fill="#fff"/><path d="M18 4.500q2 .5 2 2.500t-2 2.500z" fill="#fff"/></svg>
  <div class="w-[98px] text-right leading-[20px] -mt-[2px]"><div class="tracking-[-0.3px]">10:42</div><div class="tracking-[0.2px]">19-11-2023</div></div>
  <svg class="ml-[11px] w-[17px] h-[20px]" viewBox="0 0 17 20"><path d="M8.500.5q6 0 6 6.500v5l2 3.500v.8H.5v-.8l2-3.500V7q0-6.500 6-6.500zM5.800 17.500h5.400q-.5 2-2.700 2t-2.700-2z" fill="#fba07e"/></svg>
</footer>

<script>
const cards = [
  ['blue','i-doc','Invoice','₹15500.13'],['green','i-cart','Order Booking','₹2227946.79'],['blue','i-lib','Collection Plan'],['green','i-pay','Payment Reciept'],
  ['blue','i-lib','Payment'],['green','i-lib','Payment Plan','Next one week'],['blue','i-lib','Intransit ASN'],['green','i-lib','GRN','₹2227946.79'],
  ['blue','i-lib','Bill Account'],['green','i-lib','Purchase Order'],['blue','i-lib','Pending Purchase Indent'],['green','i-lib','Company Stock Value'],
  ['blue'],['green','i-lib','','',true],['blue']
];
document.getElementById('grid').innerHTML = cards.map(([bg, icon, title, sub, tall]) => `
  <div class="relative overflow-hidden ${bg === 'blue' ? 'h-[187px] pt-[5px]' : 'h-[185px] pt-[3px]'}">
    <svg class="absolute inset-0 size-full"><use href="#${bg}"/></svg>
    <div class="relative h-full flex flex-col items-center justify-center text-center">
      ${icon ? `<svg class="size-[30px] mb-[2px] shrink-0"><use href="#${icon}"/></svg>` : ''}
      ${title ? `<div class="w-[180px] font-semibold ${title.startsWith('P') ? 'tracking-[-0.45px]' : 'tracking-[-0.33px]'}">${title}</div>` : ''}
      ${sub ? `<div class="${sub[0] === '₹' ? 'tracking-[-0.42px]' : 'tracking-[-0.22px]'}">${sub}</div>` : ''}
      ${tall ? '<div class="h-[90px] shrink-0"></div>' : ''}
    </div>
  </div>`).join('');
</script>
</body>
</html>
